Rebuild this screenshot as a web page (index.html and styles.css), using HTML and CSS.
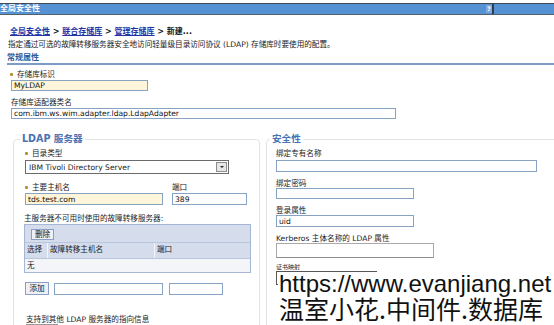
FILE: index.html
```html
<!DOCTYPE html>
<html lang="zh-CN">
<head>
    <meta charset="UTF-8">
    <title>全局安全性 - 新建存储库</title>
    <link rel="stylesheet" href="styles.css">
</head>
<body>

<div class="titlebar">
    <span class="title">全局安全性</span>
    <span class="help">?</span>
    <span class="divider"></span>
</div>

<div class="page">
    <div class="crumbs">
        <a href="#">全局安全性</a> &gt; <a href="#">联合存储库</a> &gt; <a href="#">管理存储库</a> &gt; 新建...
    </div>
    <p class="desc">指定通过可选的故障转移服务器安全地访问轻量级目录访问协议 (LDAP) 存储库时要使用的配置。</p>
    <h2 class="section-head">常规属性</h2>

    <div class="general">
        <label class="lbl req">存储库标识</label>
        <input class="txt required w-id" value="MyLDAP">
        <label class="lbl lbl-gap">存储库适配器类名</label>
        <input class="txt w-class" value="com.ibm.ws.wim.adapter.ldap.LdapAdapter">
    </div>

    <div class="columns">
        <fieldset class="box box-left">
            <legend>LDAP 服务器</legend>

            <label class="lbl req">目录类型</label>
            <div class="select w-type">
                <span>IBM Tivoli Directory Server</span>
                <span class="select-btn"></span>
            </div>

            <div class="host-row">
                <div class="host-col">
                    <label class="lbl req">主要主机名</label>
                    <input class="txt required w-host" value="tds.test.com">
                </div>
                <div>
                    <label class="lbl">端口</label>
                    <input class="txt w-port" value="389">
                </div>
            </div>

            <div class="lbl note">主服务器不可用时使用的故障转移服务器:</div>
            <div class="grid">
                <div class="grid-tools"><button class="btn">删除</button></div>
                <div class="grid-row grid-head">
                    <span>选择</span>
                    <span>故障转移主机名</span>
                    <span>端口</span>
                </div>
                <div class="grid-row grid-body">
                    <span>无</span>
                </div>
            </div>

            <div class="add-row">
                <button class="btn">添加</button>
                <input class="txt w-add-host">
                <input class="txt w-add-port">
            </div>

            <div class="lbl referral">支持到其他 LDAP 服务器的指向信息</div>
            <div class="select w-ref"></div>
        </fieldset>

        <fieldset class="box box-right">
            <legend>安全性</legend>

            <label class="lbl">绑定专有名称</label>
            <input class="txt w-dn">

            <label class="lbl lbl-s">绑定密码</label>
            <input class="txt w-pw">

            <label class="lbl lbl-s">登录属性</label>
            <input class="txt w-login" value="uid">

            <label class="lbl lbl-s">Kerberos 主体名称的 LDAP 属性</label>
            <input class="txt txt-gray w-krb">

            <label class="lbl lbl-tiny">证书映射</label>
            <div class="select w-cert"></div>
        </fieldset>
    </div>
</div>

<div class="watermark">
    <div class="wm-url">https://www.evanjiang.net</div>
    <div class="wm-cn">温室小花.中间件.数据库</div>
</div>

</body>
</html>
```

FILE: styles.css
```css
body {
    margin: 0;
    width: 554px;
    height: 325px;
    overflow: hidden;
    position: relative;
    background: #fff;
    color: #222;
    font-family: "DejaVu Sans", "Noto Sans CJK SC", sans-serif;
    font-size: 7.6px;
}

/* title bar */
.titlebar {
    display: flex;
    margin-top: 3px;
    height: 10px;
    line-height: 10px;
    background: #5592d4;
    border-top: 1px solid #3f4955;
    border-bottom: 1px solid #56616e;
    color: #fff;
    font-size: 8px;
    font-weight: bold;
}
.help {
    margin-left: auto;
    width: 6px;
    margin-top: 1px;
    height: 8px;
    line-height: 8px;
    background: #7fa9dc;
    color: #fff;
    font-size: 6px;
    text-align: center;
}
.divider {
    width: 2px;
    margin-right: 60px;
    background: #2e3e50;
}

.page {
    padding-left: 7px;
}

.crumbs {
    margin: 12px 0 0 3px;
    line-height: 10px;
    font-size: 8px;
    font-weight: bold;
    color: #111;
}
.crumbs a {
    color: #2233a6;
}

.desc {
    margin: 3px 0 0 1px;
    line-height: 10px;
}

.section-head {
    margin: 3px 0 0;
    line-height: 10px;
    font-size: 8px;
    font-weight: bold;
    color: #275a9e;
    border-bottom: 2px solid #7c9cc5;
}

/* shared form bits */
.lbl {
    display: block;
    line-height: 10px;
}
.req::before {
    content: "";
    display: inline-block;
    width: 3px;
    height: 3px;
    margin-right: 4px;
    vertical-align: 1px;
    border-radius: 1px;
    background: #b3922f;
}
.txt {
    display: block;
    box-sizing: border-box;
    height: 12px;
    margin: 0;
    padding: 0 2px;
    border: 1px solid #86a3c4;
    background: #fff;
    color: #111;
    font: inherit;
    outline: none;
}
.txt.required {
    background: #fff5d8;
}
.txt-gray {
    border-color: #a9a9a9;
    border-bottom-color: #8c8c8c;
}
.select {
    box-sizing: border-box;
    display: flex;
    align-items: center;
    border: 1px solid #6a6a6a;
    padding-left: 3px;
    background: #fff;
}
.select-btn {
    margin-left: auto;
    margin-right: 1px;
    width: 11px;
    height: 10px;
    box-sizing: border-box;
    border: 1px solid #8d8d8d;
    background: #e6e6e6;
    position: relative;
}
.select-btn::after {
    content: "";
    position: absolute;
    left: 3px;
    top: 3px;
    border-left: 2px solid transparent;
    border-right: 2px solid transparent;
    border-top: 2px solid #222;
}
.btn {
    box-sizing: border-box;
    height: 11px;
    padding: 0 3px;
    border: 1px solid #8c9fc2;
    background: #edf0f6;
    color: #111;
    font: inherit;
    line-height: 9px;
}

/* general properties */
.general {
    padding-left: 3px;
}
.general .lbl:first-child {
    margin-top: 5px;
}
.general .txt {
    margin-left: 1px;
}
.w-id {
    width: 137px;
    height: 11px;
}
.lbl-gap {
    margin-top: 7px;
    margin-left: 1px;
}
.w-class {
    width: 385px;
    height: 11px;
}

/* two fieldsets */
.columns {
    display: flex;
    margin-top: 14px;
}
.box {
    box-sizing: border-box;
    margin: 0 0 0 6px;
    padding: 4px 0 0;
    height: 220px;
    border: 1px solid #e3e3e3;
    border-radius: 4px;
    flex-shrink: 0;
}
.box legend {
    padding: 0 2px;
    line-height: 12px;
    font-size: 9.6px;
    font-weight: bold;
    color: #4a73b3;
}
.box-left {
    width: 247px;
    padding-left: 11px;
}
.box-left legend {
    margin-left: -5px;
}
.box-right {
    width: 300px;
    padding-left: 9px;
}
.box-right legend {
    margin-left: -6px;
}

.w-type {
    width: 204px;
    height: 14px;
    margin-top: 1px;
}

.host-row {
    display: flex;
    margin-top: 9px;
}
.host-col {
    width: 147px;
}
.w-host {
    width: 138px;
}
.w-port {
    width: 75px;
}

.note {
    margin: 9px 0 0 -1px;
}

.grid {
    width: 225px;
    margin-left: -1px;
    border: 1px solid #a7b6d5;
    background: #d5dcec;
}
.grid-tools {
    height: 17px;
    padding: 4px 0 0 6px;
    box-sizing: border-box;
}
.grid-row {
    display: grid;
    grid-template-columns: 22px 107px 1fr;
}
.grid-row span {
    padding-left: 2px;
}
.grid-head {
    height: 15px;
    line-height: 14px;
    border-top: 1px solid #b8c5de;
}
.grid-head span + span {
    border-left: 1px solid #f4f6fb;
}
.grid-body {
    height: 13px;
    line-height: 13px;
    background: #f4f5f9;
    border-top: 1px solid #b8c5de;
}

.add-row {
    display: flex;
    align-items: center;
    gap: 5px;
    margin-top: 9px;
}
.add-row .btn {
    height: 13px;
    width: 24px;
}
.w-add-host {
    width: 109px;
}
.w-add-port {
    width: 54px;
    margin-left: 1px;
}

.referral {
    margin: 20px 0 0 1px;
    line-height: 9px;
}
.w-ref {
    margin-left: 1px;
    width: 32px;
    height: 14px;
    border-color: #999;
}

/* security column */
.w-dn {
    width: 261px;
    margin-top: 1px;
}
.lbl-s {
    margin-top: 7px;
    line-height: 9px;
}
.w-pw {
    width: 138px;
    height: 11px;
}
.w-login {
    width: 138px;
}
.w-krb {
    width: 158px;
    height: 15px;
}
.lbl-tiny {
    margin-top: 5px;
    line-height: 8px;
    font-size: 6px;
}
.w-cert {
    width: 101px;
    height: 14px;
    border-color: #555;
}

/* site watermark pasted over the corner */
.watermark {
    position: absolute;
    left: 278px;
    top: 272px;
    right: 0;
    bottom: 0;
    background: #fff;
    color: #111;
}
.wm-url {
    padding-left: 1px;
    font-family: "Liberation Sans", Arial, sans-serif;
    font-size: 24px;
    line-height: 24px;
}
.wm-cn {
    padding-left: 1px;
    font-family: "Noto Sans CJK SC", sans-serif;
    font-size: 25px;
    line-height: 25px;
}
```
